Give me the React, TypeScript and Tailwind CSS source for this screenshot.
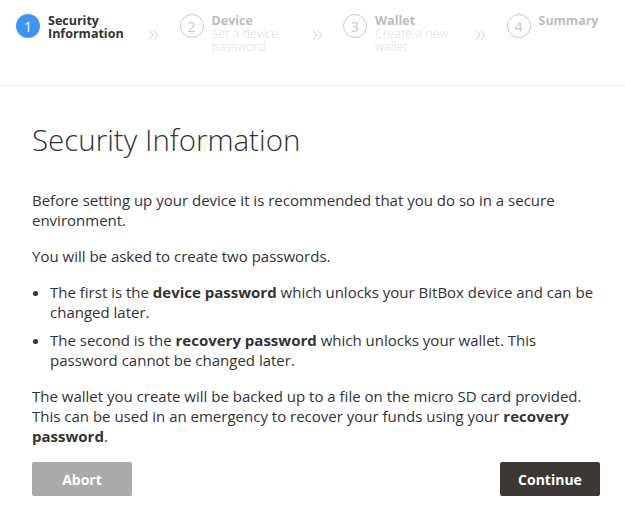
const steps = [
  { n: 1, title: "Security", title2: "Information", sub: "", active: true },
  { n: 2, title: "Device", sub: "Set a device password" },
  { n: 3, title: "Wallet", sub: "Create a new wallet" },
  { n: 4, title: "Summary", sub: "" },
];

const Chevrons = () => (
  <svg width="11" height="10" viewBox="0 0 11 10" fill="none" stroke="#cccccc" strokeWidth="1">
    <path d="M1 0.5 L5 5 L1 9.5" />
    <path d="M6 0.5 L10 5 L6 9.5" />
  </svg>
);

const Header = () => (
  <div className="flex h-[86px] border-b border-[#ececec] pl-4">
    {steps.map((s, i) => (
      <div key={s.n} className="flex w-[163.5px] shrink-0 items-start pt-[14px]">
        <div
          className={`flex h-6 w-6 shrink-0 items-center justify-center rounded-full text-[14px] ${
            s.active
              ? "bg-[#3d94f6] text-white"
              : "border border-[#c8c8c8] text-[#c8c8c8]"
          }`}
        >
          {s.n}
        </div>
        <div className="ml-2 w-[92px] leading-[13px]">
          {s.active ? (
            <div className="text-[12.5px] font-bold leading-[13px] text-[#333]">
              {s.title}
              <br />
              {s.title2}
            </div>
          ) : (
            <>
              <div className="text-[12.5px] font-bold text-[#bdbdbd]">{s.title}</div>
              {s.sub && (
                <div className="text-[12.5px] font-light text-[#dcdcdc]">{s.sub}</div>
              )}
            </>
          )}
        </div>
        {i < steps.length - 1 && (
          <div className="ml-2 mt-[16px]">
            <Chevrons />
          </div>
        )}
      </div>
    ))}
  </div>
);

export default function App() {
  return (
    <div
      className="h-[511px] w-[625px] overflow-hidden bg-white text-[#333]"
      style={{ fontFamily: '"Open Sans", "Noto Sans", sans-serif' }}
    >
      <Header />
      <div className="pl-8 pr-[25px]">
        <h1 className="mt-[34px] text-[29.5px] font-light leading-[40px] text-[#333]">
          Security Information
        </h1>
        <div className="mt-[30px] text-[15px] leading-[20px]">
          <p>
            Before setting up your device it is recommended that you do so in a secure
            environment.
          </p>
          <p className="mt-4">You will be asked to create two passwords.</p>
          <ul className="mt-4 list-disc pl-[18px]">
            <li>
              The first is the <b>device password</b> which unlocks your BitBox device and can be
              changed later.
            </li>
            <li className="mt-2">
              The second is the <b>recovery password</b> which unlocks your wallet. This
              password cannot be changed later.
            </li>
          </ul>
          <p className="mt-4">
            The wallet you create will be backed up to a file on the micro SD card provided.
            This can be used in an emergency to recover your funds using your{" "}
            <b>recovery password</b>.
          </p>
        </div>
        <div className="mt-4 flex justify-between">
          <button className="h-[34px] w-[100px] rounded-[2px] bg-[#aaaaaa] text-[14px] font-bold text-white">
            Abort
          </button>
          <button className="h-[34px] w-[100px] rounded-[2px] bg-[#3b3835] text-[14px] font-bold text-white">
            Continue
          </button>
        </div>
      </div>
    </div>
  );
}
